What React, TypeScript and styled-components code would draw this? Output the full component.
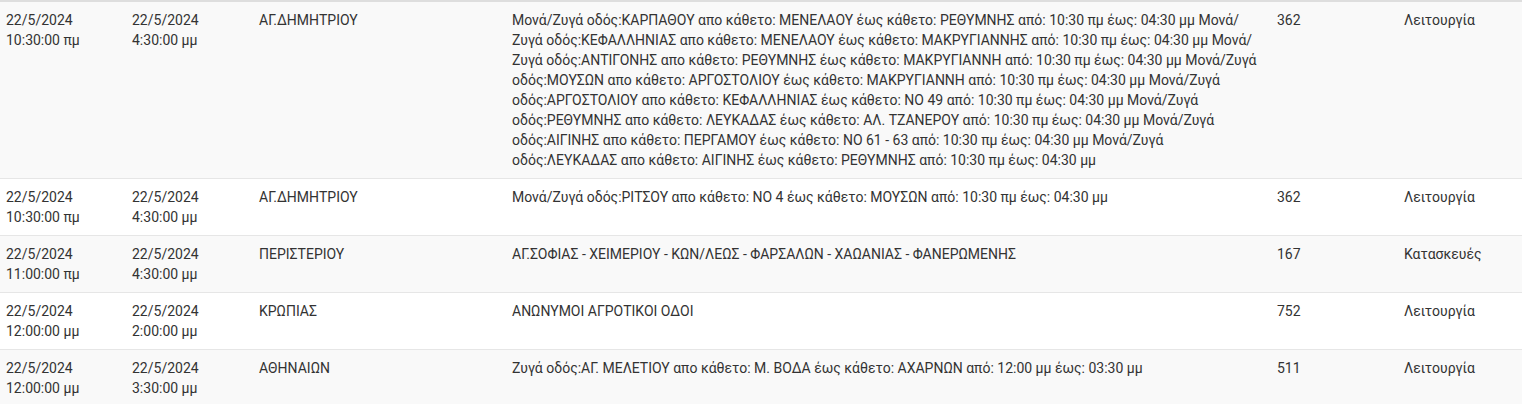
import React from 'react';
import styled, { createGlobalStyle } from 'styled-components';

type Row = {
	from: string;
	to: string;
	area: string;
	desc: string;
	code: string;
	kind: string;
};

const rows: Row[] = [
	{
		from: '22/5/2024 10:30:00 πμ',
		to: '22/5/2024 4:30:00 μμ',
		area: 'ΑΓ.ΔΗΜΗΤΡΙΟΥ',
		desc:
			'Μονά/Ζυγά οδός:ΚΑΡΠΑΘΟΥ απο κάθετο: ΜΕΝΕΛΑΟΥ έως κάθετο: ΡΕΘΥΜΝΗΣ από: 10:30 πμ έως: 04:30 μμ Μονά/Ζυγά οδός:ΚΕΦΑΛΛΗΝΙΑΣ απο κάθετο: ΜΕΝΕΛΑΟΥ έως κάθετο: ΜΑΚΡΥΓΙΑΝΝΗΣ από: 10:30 πμ έως: 04:30 μμ Μονά/Ζυγά οδός:ΑΝΤΙΓΟΝΗΣ απο κάθετο: ΡΕΘΥΜΝΗΣ έως κάθετο: ΜΑΚΡΥΓΙΑΝΝΗ από: 10:30 πμ έως: 04:30 μμ Μονά/Ζυγά οδός:ΜΟΥΣΩΝ απο κάθετο: ΑΡΓΟΣΤΟΛΙΟΥ έως κάθετο: ΜΑΚΡΥΓΙΑΝΝΗ από: 10:30 πμ έως: 04:30 μμ Μονά/Ζυγά οδός:ΑΡΓΟΣΤΟΛΙΟΥ απο κάθετο: ΚΕΦΑΛΛΗΝΙΑΣ έως κάθετο: ΝΟ 49 από: 10:30 πμ έως: 04:30 μμ Μονά/Ζυγά οδός:ΡΕΘΥΜΝΗΣ απο κάθετο: ΛΕΥΚΑΔΑΣ έως κάθετο: ΑΛ. ΤΖΑΝΕΡΟΥ από: 10:30 πμ έως: 04:30 μμ Μονά/Ζυγά οδός:ΑΙΓΙΝΗΣ απο κάθετο: ΠΕΡΓΑΜΟΥ έως κάθετο: ΝΟ 61 - 63 από: 10:30 πμ έως: 04:30 μμ Μονά/Ζυγά οδός:ΛΕΥΚΑΔΑΣ απο κάθετο: ΑΙΓΙΝΗΣ έως κάθετο: ΡΕΘΥΜΝΗΣ από: 10:30 πμ έως: 04:30 μμ',
		code: '362',
		kind: 'Λειτουργία',
	},
	{
		from: '22/5/2024 10:30:00 πμ',
		to: '22/5/2024 4:30:00 μμ',
		area: 'ΑΓ.ΔΗΜΗΤΡΙΟΥ',
		desc: 'Μονά/Ζυγά οδός:ΡΙΤΣΟΥ απο κάθετο: ΝΟ 4 έως κάθετο: ΜΟΥΣΩΝ από: 10:30 πμ έως: 04:30 μμ',
		code: '362',
		kind: 'Λειτουργία',
	},
	{
		from: '22/5/2024 11:00:00 πμ',
		to: '22/5/2024 4:30:00 μμ',
		area: 'ΠΕΡΙΣΤΕΡΙΟΥ',
		desc: 'ΑΓ.ΣΟΦΙΑΣ - ΧΕΙΜΕΡΙΟΥ - ΚΩΝ/ΛΕΩΣ - ΦΑΡΣΑΛΩΝ - ΧΑΩΑΝΙΑΣ - ΦΑΝΕΡΩΜΕΝΗΣ',
		code: '167',
		kind: 'Κατασκευές',
	},
	{
		from: '22/5/2024 12:00:00 μμ',
		to: '22/5/2024 2:00:00 μμ',
		area: 'ΚΡΩΠΙΑΣ',
		desc: 'ΑΝΩΝΥΜΟΙ ΑΓΡΟΤΙΚΟΙ ΟΔΟΙ',
		code: '752',
		kind: 'Λειτουργία',
	},
	{
		from: '22/5/2024 12:00:00 μμ',
		to: '22/5/2024 3:30:00 μμ',
		area: 'ΑΘΗΝΑΙΩΝ',
		desc: 'Ζυγά οδός:ΑΓ. ΜΕΛΕΤΙΟΥ απο κάθετο: Μ. ΒΟΔΑ έως κάθετο: ΑΧΑΡΝΩΝ από: 12:00 μμ έως: 03:30 μμ',
		code: '511',
		kind: 'Λειτουργία',
	},
];

const widths = [126, 127, 253, 765, 127, 124];

const App = (): JSX.Element => {
	return (
		<>
			<GlobalStyle />
			<Table>
				<colgroup>
					{widths.map((w, i) => (
						<col key={i} style={{ width: w }} />
					))}
				</colgroup>
				<tbody>
					{rows.map((r, i) => (
						<Tr key={i} $striped={i % 2 === 0} $first={i === 0}>
							<Td>{r.from}</Td>
							<Td>{r.to}</Td>
							<Td>{r.area}</Td>
							<Td>{r.desc}</Td>
							<Td>{r.code}</Td>
							<Td>{r.kind}</Td>
						</Tr>
					))}
				</tbody>
			</Table>
		</>
	);
};

const GlobalStyle = createGlobalStyle`
	html, body {
		margin: 0;
		padding: 0;
		background: #fff;
	}
	body {
		font-family: Roboto, "Noto Sans", sans-serif;
		font-size: 14px;
		line-height: 20px;
		color: #333;
	}
`;
const Table = styled.table`
	width: 1522px;
	table-layout: fixed;
	border-collapse: collapse;
	border-spacing: 0;
`;
const Tr = styled.tr<{ $striped: boolean; $first: boolean }>`
	background-color: ${(p) => (p.$striped ? '#f9f9f9' : '#fff')};
	border-top: ${(p) => (p.$first ? '2px solid #dedede' : '1px solid #e6e6e6')};
`;
const Td = styled.td`
	padding: 8px 6px;
	vertical-align: top;
	text-align: left;
`;

export default App;
